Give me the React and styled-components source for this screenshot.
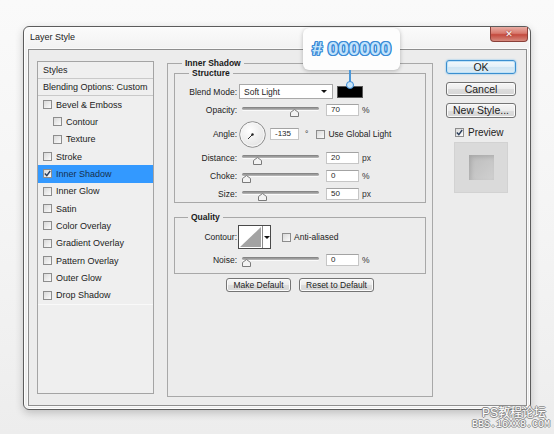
import React from 'react';
import styled, { createGlobalStyle } from 'styled-components';

const GlobalStyle = createGlobalStyle`
  html, body {
    margin: 0;
    padding: 0;
  }
  body {
    width: 554px;
    height: 434px;
    overflow: hidden;
    background: linear-gradient(180deg, #fafafa 0%, #f4f4f4 55%, #ededed 100%);
    font-family: "Liberation Sans", Arial, sans-serif;
    color: #1e1e1e;
  }
`;

const Page = styled.div`
  position: relative;
  width: 554px;
  height: 434px;
  box-sizing: border-box;
  padding: 26px 0 0 23px;
`;

const Dialog = styled.div`
  width: 508px;
  height: 384px;
  box-sizing: border-box;
  border: 1px solid #5c5c5c;
  border-radius: 6px;
  background: linear-gradient(180deg, #fbfbfb 0px, #f1f1f1 24px, #eeeeee 100%);
  box-shadow: 0 3px 9px rgba(0, 0, 0, 0.2), inset 0 0 0 1px #fdfdfd;
  display: flex;
  flex-direction: column;
`;

const TitleBar = styled.div`
  height: 22px;
  flex-shrink: 0;
  display: flex;
  align-items: flex-start;
  justify-content: space-between;
  padding: 0 2px 0 6px;
`;

const Title = styled.div`
  font-size: 9px;
  line-height: 20px;
  color: #222;
`;

const Close = styled.div`
  width: 38px;
  height: 15px;
  box-sizing: border-box;
  border: 1px solid #8a4039;
  border-top: none;
  border-radius: 0 0 4px 4px;
  background: linear-gradient(180deg, #e9ada4 0%, #d8796d 45%, #c44a3e 55%, #d68a7e 100%);
  color: #fff;
  font-family: "DejaVu Sans", sans-serif;
  font-weight: bold;
  font-size: 9px;
  line-height: 14px;
  text-align: center;
  text-shadow: 0 0 2px #7a2a22;
`;

const Client = styled.div`
  flex: 1;
  margin: 0 3px 3px 4px;
  box-sizing: border-box;
  border: 1px solid #8e8e8e;
  box-shadow: 0 0 0 1px #fafafa;
  background: #ececec;
  display: flex;
  align-items: flex-start;
  padding: 10px 0 0 8px;
`;

/* ---------- left list of styles ---------- */

const StylesPanel = styled.div`
  width: 117px;
  height: 333px;
  margin-top: 1px;
  box-sizing: border-box;
  border: 1px solid #a4a4a4;
  background: #efefef;
  flex-shrink: 0;
`;

const HeadRow = styled.div`
  height: 16px;
  border-bottom: 1px solid #c9c9c9;
  padding-left: 5px;
  font-size: 9px;
  line-height: 16px;
  color: #222;
`;

const StyleList = styled.div`
  border-bottom: 1px solid #f9f9f9;
`;

const StyleRow = styled.div`
  height: 17.33px;
  display: flex;
  align-items: center;
  gap: 4px;
  padding-left: ${p => (p.$indent ? 15 : 5)}px;
  font-size: 9px;
  color: ${p => (p.$active ? '#15304f' : '#222')};
  background: ${p => (p.$active ? '#3399ff' : 'transparent')};
`;

const Box = styled.span`
  width: 9px;
  height: 9px;
  box-sizing: border-box;
  flex-shrink: 0;
  border: 1px solid #8d8d8d;
  background: linear-gradient(135deg, #d9d9d9, #fbfbfb);
  display: inline-flex;
  align-items: center;
  justify-content: center;
  margin-left: ${p => p.$ml || 0}px;
`;

const Check = ({ on, ml }) => (
  <Box $ml={ml}>
    {on && (
      <svg width="7" height="7" viewBox="0 0 7 7">
        <path d="M0.8 3.6 L2.8 5.6 L6.2 1" stroke="#2b3f5c" strokeWidth="1.4" fill="none" />
      </svg>
    )}
  </Box>
);

/* ---------- middle group boxes ---------- */

const Group = styled.fieldset`
  margin: 0;
  min-width: 0;
  box-sizing: border-box;
  border: 1px solid #a8a8a8;
`;

const MainGroup = styled(Group)`
  width: 266px;
  height: 339px;
  margin: -2px 0 0 13px;
  padding: 0 6px;
  flex-shrink: 0;
`;

const StructureGroup = styled(Group)`
  padding: 6px 0 1px 0;
`;

const QualityGroup = styled(Group)`
  margin-top: 9px;
  padding: 3px 0 6px 0;
`;

const Legend = styled.legend`
  margin-left: ${p => p.$indent}px;
  padding: 0 3px;
  font-size: 8.5px;
  font-weight: bold;
  line-height: 10px;
  color: #1a1a1a;
`;

const Rows = styled.div`
  display: flex;
  flex-direction: column;
  gap: 4px;
`;

const Row = styled.div`
  height: ${p => p.$h}px;
  display: flex;
  align-items: center;
`;

const Label = styled.span`
  width: ${p => p.$w || 62}px;
  flex-shrink: 0;
  text-align: right;
  margin-right: 3px;
  font-size: 8.5px;
  color: #222;
`;

const Select = styled.div`
  width: 94px;
  height: 15px;
  margin-left: -1px;
  box-sizing: border-box;
  border: 1px solid #a9a9a9;
  background: #fff;
  display: flex;
  align-items: center;
  justify-content: space-between;
  padding: 0 5px 0 4px;
  font-size: 8.5px;
`;

const Arrow = styled.span`
  width: 0;
  height: 0;
  border-left: 3px solid transparent;
  border-right: 3px solid transparent;
  border-top: 3px solid #111;
`;

const Swatch = styled.div`
  width: 26px;
  height: 12px;
  margin-left: 4px;
  box-sizing: border-box;
  border: 1px solid #5a5a5a;
  background: #000;
`;

const SliderWrap = styled.div`
  position: relative;
  width: 77px;
  height: 14px;
  margin-left: 2px;
  flex-shrink: 0;
`;

const Track = styled.div`
  position: absolute;
  left: 0;
  right: 0;
  top: 4px;
  height: 3px;
  border-radius: 2px;
  background: linear-gradient(180deg, #7b7b7b, #bcbcbc);
  box-shadow: 0 1px 0 #fafafa;
`;

const ThumbSvg = styled.svg`
  position: absolute;
  top: 6px;
`;

const Slider = ({ pos }) => (
  <SliderWrap>
    <Track />
    <ThumbSvg width="9" height="8" viewBox="0 0 9 8" style={{ left: `${pos * 68}px` }}>
      <path d="M0.5 7.5 V3.5 L4.5 0.5 L8.5 3.5 V7.5 Z" fill="#f3f3f3" stroke="#7a7a7a" />
    </ThumbSvg>
  </SliderWrap>
);

const Field = styled.div`
  width: ${p => p.$w || 33}px;
  height: 12px;
  margin-left: ${p => p.$ml ?? 7}px;
  box-sizing: border-box;
  border: 1px solid #c6c6c6;
  border-top-color: #a3a3a3;
  background: #fff;
  padding-left: 4px;
  font-size: 8px;
  line-height: 10px;
  flex-shrink: 0;
`;

const Unit = styled.span`
  margin-left: ${p => p.$ml ?? 3}px;
  font-size: 8.5px;
  color: #333;
`;

const Text = styled.span`
  margin-left: 3px;
  font-size: 8.5px;
  color: #222;
`;

const DialSvg = styled.svg`
  margin-left: -1px;
  flex-shrink: 0;
`;

const Dial = () => (
  <DialSvg width="27" height="27" viewBox="0 0 27 27">
    <defs>
      <radialGradient id="dialFill" cx="0.4" cy="0.35" r="0.7">
        <stop offset="0" stopColor="#ffffff" />
        <stop offset="1" stopColor="#e2e2e2" />
      </radialGradient>
    </defs>
    <circle cx="13.5" cy="13.5" r="12.8" fill="url(#dialFill)" stroke="#8c8c8c" />
    <circle cx="13.5" cy="13.5" r="11.6" fill="none" stroke="#f7f7f7" />
    <line x1="13.5" y1="13.5" x2="9" y2="18" stroke="#333" strokeWidth="1" />
    <circle cx="13.5" cy="13.5" r="1.2" fill="#222" />
  </DialSvg>
);

const ContourBox = styled.div`
  width: 33px;
  height: 24px;
  margin-left: -2px;
  box-sizing: border-box;
  border: 1px solid #4a4a4a;
  background: #fff;
  display: flex;
  flex-shrink: 0;
`;

const ContourDrop = styled.div`
  flex: 1;
  border-left: 1px solid #8a8a8a;
  display: flex;
  align-items: center;
  justify-content: center;
`;

const ButtonRow = styled.div`
  margin-top: 4px;
  display: flex;
  justify-content: center;
  gap: 8px;
`;

const Button = styled.div`
  width: ${p => p.$w}px;
  height: ${p => p.$h || 14}px;
  margin-top: ${p => p.$mt || 0}px;
  box-sizing: border-box;
  border: 1px solid ${p => (p.$primary ? '#3b8fd0' : '#747474')};
  border-radius: 3px;
  background: ${p =>
    p.$primary
      ? 'linear-gradient(180deg, #f2f8fc 0%, #e3f0f8 50%, #cfe5f3 51%, #dcecf6 100%)'
      : 'linear-gradient(180deg, #f6f6f6 0%, #ececec 50%, #dddddd 51%, #d6d6d6 100%)'};
  box-shadow: ${p => (p.$primary ? '0 0 2px #68b6ea, inset 0 0 0 1px #bfe2f7' : 'inset 0 0 0 1px #fbfbfb')};
  font-size: ${p => p.$fs || 8.5}px;
  line-height: ${p => (p.$h || 14) - 2}px;
  text-align: center;
  color: #1c1c1c;
`;

/* ---------- right column ---------- */

const Side = styled.div`
  width: 70px;
  margin-left: 13px;
  display: flex;
  flex-direction: column;
  align-items: center;
  flex-shrink: 0;
`;

const PreviewRow = styled.div`
  align-self: flex-start;
  margin: 9px 0 0 9px;
  height: 10px;
  display: flex;
  align-items: center;
  gap: 4px;
  font-size: 10px;
  color: #222;
`;

const PreviewBox = styled.div`
  width: 54px;
  height: 51px;
  margin-top: 5px;
  box-sizing: border-box;
  border: 1px solid #d2d2d2;
  background: #dadada;
  display: flex;
  align-items: center;
  justify-content: center;
`;

const PreviewTile = styled.div`
  width: 25px;
  height: 25px;
  background: linear-gradient(135deg, #bcbcbc 0%, #c8c8c8 60%, #d0d0d0 100%);
  box-shadow: inset 2px 2px 4px rgba(0, 0, 0, 0.12);
`;

/* ---------- overlays ---------- */

const Callout = styled.div`
  position: absolute;
  left: 303px;
  top: 28px;
  width: 97px;
  height: 42px;
  box-sizing: border-box;
  border-radius: 6px;
  background: #fdfdfd;
  box-shadow: 0 1px 4px rgba(0, 0, 0, 0.25);
  display: flex;
  align-items: center;
  justify-content: center;
  font-family: "Liberation Sans", Arial, sans-serif;
  font-weight: bold;
  font-size: 19px;
  color: #c4e3fb;
  text-shadow:
    1.2px 0 0 #3a8ad6, -1.2px 0 0 #3a8ad6, 0 1.2px 0 #3a8ad6, 0 -1.2px 0 #3a8ad6,
    1px 1px 0 #3a8ad6, -1px -1px 0 #3a8ad6, 1px -1px 0 #3a8ad6, -1px 1px 0 #3a8ad6;
`;

const Stem = styled.div`
  position: absolute;
  left: 349px;
  top: 70px;
  width: 2px;
  height: 13px;
  background: #4b98d9;
`;

const StemDot = styled.div`
  position: absolute;
  left: 346px;
  top: 81px;
  width: 8px;
  height: 8px;
  box-sizing: border-box;
  border-radius: 50%;
  border: 1.5px solid #3a8ad6;
  background: #c9e6fb;
`;

const Watermark = styled.div`
  position: absolute;
  right: 4px;
  bottom: 4px;
  display: flex;
  flex-direction: column;
  align-items: center;
  color: #fff;
  text-shadow:
    1px 0 0 #8a8a8a, -1px 0 0 #8a8a8a, 0 1px 0 #8a8a8a, 0 -1px 0 #8a8a8a;
`;

const MarkTop = styled.div`
  font-family: "Liberation Sans", "Noto Sans CJK SC", sans-serif;
  font-size: 12px;
  line-height: 13px;
  margin-left: 6px;
`;

const MarkBottom = styled.div`
  font-family: "Liberation Mono", monospace;
  font-size: 10px;
  line-height: 10px;
`;

const styleItems = [
  { name: 'Bevel & Emboss' },
  { name: 'Contour', indent: true },
  { name: 'Texture', indent: true },
  { name: 'Stroke' },
  { name: 'Inner Shadow', checked: true, active: true },
  { name: 'Inner Glow' },
  { name: 'Satin' },
  { name: 'Color Overlay' },
  { name: 'Gradient Overlay' },
  { name: 'Pattern Overlay' },
  { name: 'Outer Glow' },
  { name: 'Drop Shadow' },
];

const SliderRow = ({ label, value, unit, pos }) => (
  <Row $h={14}>
    <Label>{label}</Label>
    <Slider pos={pos} />
    <Field>{value}</Field>
    <Unit>{unit}</Unit>
  </Row>
);

const App = () => {
  return (
    <Page>
      <GlobalStyle />
      <Dialog>
        <TitleBar>
          <Title>Layer Style</Title>
          <Close>✕</Close>
        </TitleBar>
        <Client>
          <StylesPanel>
            <HeadRow>Styles</HeadRow>
            <HeadRow>Blending Options: Custom</HeadRow>
            <StyleList>
              {styleItems.map(item => (
                <StyleRow key={item.name} $indent={item.indent} $active={item.active}>
                  <Check on={item.checked} />
                  {item.name}
                </StyleRow>
              ))}
            </StyleList>
          </StylesPanel>

          <MainGroup>
            <Legend $indent={8}>Inner Shadow</Legend>
            <StructureGroup>
              <Legend $indent={14}>Structure</Legend>
              <Rows>
                <Row $h={15}>
                  <Label>Blend Mode:</Label>
                  <Select>
                    Soft Light
                    <Arrow />
                  </Select>
                  <Swatch />
                </Row>
                <SliderRow label="Opacity:" value="70" unit="%" pos={0.7} />
                <Row $h={26}>
                  <Label>Angle:</Label>
                  <Dial />
                  <Field $w={29} $ml={4}>-135</Field>
                  <Unit $ml={6}>°</Unit>
                  <Check ml={8} />
                  <Text>Use Global Light</Text>
                </Row>
                <SliderRow label="Distance:" value="20" unit="px" pos={0.16} />
                <SliderRow label="Choke:" value="0" unit="%" pos={0} />
                <SliderRow label="Size:" value="50" unit="px" pos={0.23} />
              </Rows>
            </StructureGroup>

            <QualityGroup>
              <Legend $indent={13}>Quality</Legend>
              <Rows>
                <Row $h={24}>
                  <Label>Contour:</Label>
                  <ContourBox>
                    <svg width="23" height="22" viewBox="0 0 23 22">
                      <polygon points="1,21 22,1 22,21" fill="#a3a3a3" />
                    </svg>
                    <ContourDrop>
                      <Arrow />
                    </ContourDrop>
                  </ContourBox>
                  <Check ml={11} />
                  <Text>Anti-aliased</Text>
                </Row>
                <SliderRow label="Noise:" value="0" unit="%" pos={0} />
              </Rows>
            </QualityGroup>

            <ButtonRow>
              <Button $w={65}>Make Default</Button>
              <Button $w={75}>Reset to Default</Button>
            </ButtonRow>
          </MainGroup>

          <Side>
            <Button $w={70} $primary $fs={10.5}>OK</Button>
            <Button $w={70} $fs={10.5} $mt={8}>Cancel</Button>
            <Button $w={70} $h={15} $fs={10.5} $mt={7}>New Style...</Button>
            <PreviewRow>
              <Check on />
              Preview
            </PreviewRow>
            <PreviewBox>
              <PreviewTile />
            </PreviewBox>
          </Side>
        </Client>
      </Dialog>

      <Callout># 000000</Callout>
      <Stem />
      <StemDot />

      <Watermark>
        <MarkTop>PS教程论坛</MarkTop>
        <MarkBottom>BBS.16XX8.COM</MarkBottom>
      </Watermark>
    </Page>
  );
};

export default App;
